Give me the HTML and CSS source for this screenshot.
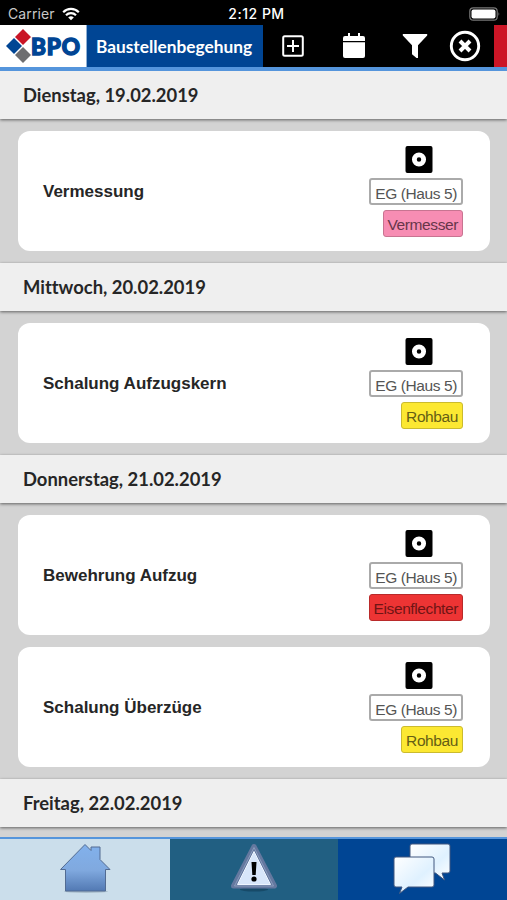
FILE: index.html
```html
<!DOCTYPE html>
<html lang="de">
<head>
    <meta charset="UTF-8">
    <meta name="viewport" content="width=device-width, initial-scale=1.0">
    <title>Baustellenbegehung</title>
    <link rel="stylesheet" href="styles.css">
</head>
<body>
    <div class="status-bar">
        <div class="carrier">
            <span>Carrier</span>
            <svg width="18" height="14" viewBox="0 0 18 14" fill="none" stroke="#fff" stroke-width="2.2">
                <path d="M1.2 5.2a11 11 0 0 1 15.6 0"/>
                <path d="M4 8.3a7 7 0 0 1 10 0"/>
                <path d="M6.2 10.5a4 4 0 0 1 5.6 0L9 13.2z" fill="#fff" stroke="none"/>
            </svg>
        </div>
        <div class="time">2:12 PM</div>
        <div class="battery">
            <svg width="32" height="14" viewBox="0 0 32 14">
                <rect x=".8" y=".8" width="27.4" height="12.4" rx="3.5" fill="none" stroke="#777" stroke-width="1.2"/>
                <rect x="2.5" y="2.5" width="24" height="9" rx="2" fill="#fff"/>
                <path d="M29.5 5q1.8 2 0 4z" fill="#777"/>
            </svg>
        </div>
    </div>

    <header class="toolbar">
        <div class="logo">
            <svg width="26" height="36" viewBox="0 0 26 36">
                <path d="M17 1l8 8-8 8-8-8z" fill="#c91526"/>
                <path d="M8 10l8 8-8 8-8-8z" fill="#004594"/>
                <path d="M17 19l8 8-8 8-8-8z" fill="#6e6e70"/>
            </svg>
            <span>BPO</span>
        </div>
        <div class="title"><span>Baustellenbegehung</span></div>
        <div class="actions">
            <svg class="add" width="24" height="24" viewBox="0 0 24 24" fill="none" stroke="#fff">
                <rect x="2.2" y="2.2" width="19.6" height="19.6" rx="1.5" stroke-width="2"/>
                <path d="M12 6v12M6 12h12" stroke-width="2"/>
            </svg>
            <svg class="calendar" width="24" height="26" viewBox="0 0 24 26" fill="#fff">
                <path d="M1 8V5q0-2 2-2h3V0h2v3h8V0h2v3h3q2 0 2 2v3z"/>
                <path d="M1 9.2h22V23q0 2-2 2H3q-2 0-2-2z"/>
            </svg>
            <svg class="filter" width="26" height="26" viewBox="0 0 26 26" fill="#fff">
                <path d="M.8 1h24.4v1.5L16 12.3V25h-1.500L10 21.2v-8.900L.8 2.500z"/>
            </svg>
            <svg class="close" width="32" height="32" viewBox="0 0 32 32" fill="none" stroke="#fff">
                <circle cx="16" cy="16" r="13.7" stroke-width="2.9"/>
                <path d="M11 11l10 10M21 11L11 21" stroke-width="4"/>
            </svg>
        </div>
        <div class="alert-edge"></div>
    </header>

    <main class="schedule">
        <h2 class="day">Dienstag, 19.02.2019</h2>
        <div class="tasks">
            <div class="task">
                <h3>Vermessung</h3>
                <div class="tags">
                    <svg class="marker" viewBox="0 0 28 28"><rect width="28" height="28" rx="2"/><circle cx="14" cy="14" r="4.800"/></svg>
                    <span class="tag place">EG (Haus 5)</span>
                    <span class="tag surveyor">Vermesser</span>
                </div>
            </div>
        </div>

        <h2 class="day">Mittwoch, 20.02.2019</h2>
        <div class="tasks">
            <div class="task">
                <h3>Schalung Aufzugskern</h3>
                <div class="tags">
                    <svg class="marker" viewBox="0 0 28 28"><rect width="28" height="28" rx="2"/><circle cx="14" cy="14" r="4.800"/></svg>
                    <span class="tag place">EG (Haus 5)</span>
                    <span class="tag shell">Rohbau</span>
                </div>
            </div>
        </div>

        <h2 class="day">Donnerstag, 21.02.2019</h2>
        <div class="tasks">
            <div class="task">
                <h3>Bewehrung Aufzug</h3>
                <div class="tags">
                    <svg class="marker" viewBox="0 0 28 28"><rect width="28" height="28" rx="2"/><circle cx="14" cy="14" r="4.800"/></svg>
                    <span class="tag place">EG (Haus 5)</span>
                    <span class="tag steel">Eisenflechter</span>
                </div>
            </div>
            <div class="task">
                <h3>Schalung Überzüge</h3>
                <div class="tags">
                    <svg class="marker" viewBox="0 0 28 28"><rect width="28" height="28" rx="2"/><circle cx="14" cy="14" r="4.800"/></svg>
                    <span class="tag place">EG (Haus 5)</span>
                    <span class="tag shell">Rohbau</span>
                </div>
            </div>
        </div>

        <h2 class="day">Freitag, 22.02.2019</h2>
    </main>

    <nav class="tabs">
        <div class="tab home">
            <svg width="52" height="52" viewBox="0 0 52 52">
                <defs>
                    <linearGradient id="house" x1="0" y1="0" x2="0" y2="1">
                        <stop offset="0" stop-color="#82b1ec"/>
                        <stop offset=".55" stop-color="#80a9df"/>
                        <stop offset="1" stop-color="#5279b3"/>
                    </linearGradient>
                </defs>
                <ellipse cx="27" cy="48.500" rx="22" ry="1.500" fill="#a9bdcb"/>
                <path d="M26 1.500L32 7.500V4h9v12.500l10 10h-4.500V48h-40V26.500H1.500z" fill="url(#house)" stroke="#526b92" stroke-width="1"/>
            </svg>
        </div>
        <div class="tab warning">
            <svg width="50" height="50" viewBox="0 0 50 50">
                <ellipse cx="25" cy="46.500" rx="14" ry="2" fill="#174a68"/>
                <path d="M25 3.500L45.500 43h-41z" fill="#64789f" stroke="#64789f" stroke-width="5" stroke-linejoin="round"/>
                <path d="M25 4.500L44.500 43h-39z" fill="none" stroke="#8b9cbc" stroke-width="1"/>
                <path d="M25 8.500L41.500 41.500h-33z" fill="#d8e6fa" stroke="#eef5ff"/>
                <path d="M22.500 19h5l-.8 13h-3.400z"/>
                <circle cx="25" cy="36" r="2.600"/>
            </svg>
        </div>
        <div class="tab chat">
            <svg width="60" height="54" viewBox="0 0 60 54">
                <defs>
                    <linearGradient id="bubble" x1="0" y1="0" x2="1" y2="1">
                        <stop offset="0" stop-color="#fff"/>
                        <stop offset=".6" stop-color="#dff1ff"/>
                        <stop offset="1" stop-color="#fff"/>
                    </linearGradient>
                </defs>
                <g fill="url(#bubble)" stroke="#41577f" stroke-width="1">
                    <path d="M19 1h36q2 0 2 2v25q0 2-2 2h-6l2.500 7-9-7H19q-2 0-2-2V3q0-2 2-2z"/>
                    <path d="M3 14h36q2 0 2 2v26q0 2-2 2H15L6.500 50.500 9 44H3q-2 0-2-2V16q0-2 2-2z"/>
                </g>
            </svg>
        </div>
    </nav>
</body>
</html>
```
FILE: styles.css
```css
* {
    margin: 0;
    padding: 0;
    box-sizing: border-box;
}

body {
    width: 507px;
    height: 900px;
    overflow: hidden;
    display: flex;
    flex-direction: column;
    background: #d3d3d3;
    color: #262626;
    font-family: "Liberation Sans", Arial, sans-serif;
}

svg {
    display: block;
    flex: none;
}

.status-bar {
    height: 25px;
    flex: none;
    display: grid;
    grid-template-columns: 1fr auto 1fr;
    align-items: center;
    padding: 2px 6px 0 8px;
    background: #000;
    color: #fff;
    font-family: Inter, sans-serif;
    font-size: 14px;
}

.carrier {
    display: flex;
    align-items: center;
    gap: 7px;
    color: #c8c8c8;
    letter-spacing: 0.1px;
}

.time {
    font-weight: 500;
    letter-spacing: 0.5px;
    margin-left: 4px;
}

.battery {
    justify-self: end;
}

/* Toolbar */
.toolbar {
    height: 46px;
    flex: none;
    display: flex;
    background: #000;
    border-bottom: 4px solid #5595dc;
}

.logo {
    width: 87px;
    display: flex;
    align-items: center;
    padding-left: 6px;
    background: #fff;
    border-right: 1px solid #8fb0d4;
}

.logo span {
    margin-left: -1px;
    font-family: Lato, sans-serif;
    font-size: 22.5px;
    font-weight: 900;
    letter-spacing: 0.9px;
    color: #004594;
    -webkit-text-stroke: 1.4px #004594;
}

.title {
    width: 176px;
    display: flex;
    align-items: center;
    padding-left: 9px;
    background: #004594;
    color: #fff;
    font-family: Lato, sans-serif;
    font-size: 17.3px;
    font-weight: 700;
}

.actions {
    flex: 1;
    display: flex;
    align-items: center;
    padding-left: 18px;
}

.calendar {
    margin-left: 37px;
}

.filter {
    margin-left: 36px;
}

.close {
    margin-left: 21px;
}

.alert-edge {
    width: 13px;
    background: #cc1526;
}

/* Schedule list */
.schedule {
    flex: 1;
    min-height: 0;
    overflow: hidden;
}

.day {
    height: 48px;
    padding-left: 23px;
    background: #efefef;
    box-shadow: 0 1px 3px rgba(0, 0, 0, 0.55);
    font-family: Lato, sans-serif;
    font-size: 18.4px;
    font-weight: 700;
    font-variant-ligatures: none;
    line-height: 49px;
}

.tasks {
    display: flex;
    flex-direction: column;
    gap: 12px;
    padding: 12px 17px 12px 18px;
}

.task {
    height: 120px;
    display: flex;
    align-items: center;
    justify-content: space-between;
    padding: 0 27px 0 25px;
    background: #fff;
    border-radius: 12px;
}

.task h3 {
    padding-top: 2px;
    font-size: 17px;
    font-weight: 700;
}

.tags {
    display: flex;
    flex-direction: column;
    align-items: flex-end;
    gap: 5px;
}

.marker {
    width: 28px;
    height: 27px;
    margin-right: 30px;
}

.marker circle {
    fill: #000;
    stroke: #fff;
    stroke-width: 5px;
}

.tag {
    height: 27px;
    padding: 0 4px;
    border: 1px solid #aaa;
    border-radius: 3px;
    font-size: 15.5px;
    letter-spacing: -0.4px;
    line-height: 28px;
    white-space: nowrap;
}

.place {
    color: #555;
    background: #fff;
    border-width: 2px;
    line-height: 27px;
}

.surveyor {
    color: #67364a;
    background: #f78db3;
    border-color: #c87491;
}

.shell {
    color: #655e15;
    background: #fce832;
    border-color: #cbbb2e;
}

.steel {
    color: #701414;
    background: #ed3434;
    border-color: #b92a2a;
}

/* Bottom navigation */
.tabs {
    height: 63px;
    flex: none;
    display: grid;
    grid-template-columns: 170px 168px 1fr;
    border-top: 2px solid #5595dc;
}

.tab {
    display: flex;
    justify-content: center;
    padding-top: 4px;
}

.home {
    background: #cbdeeb;
}

.warning {
    background: #215f82;
}

.chat {
    background: #004594;
}
```
